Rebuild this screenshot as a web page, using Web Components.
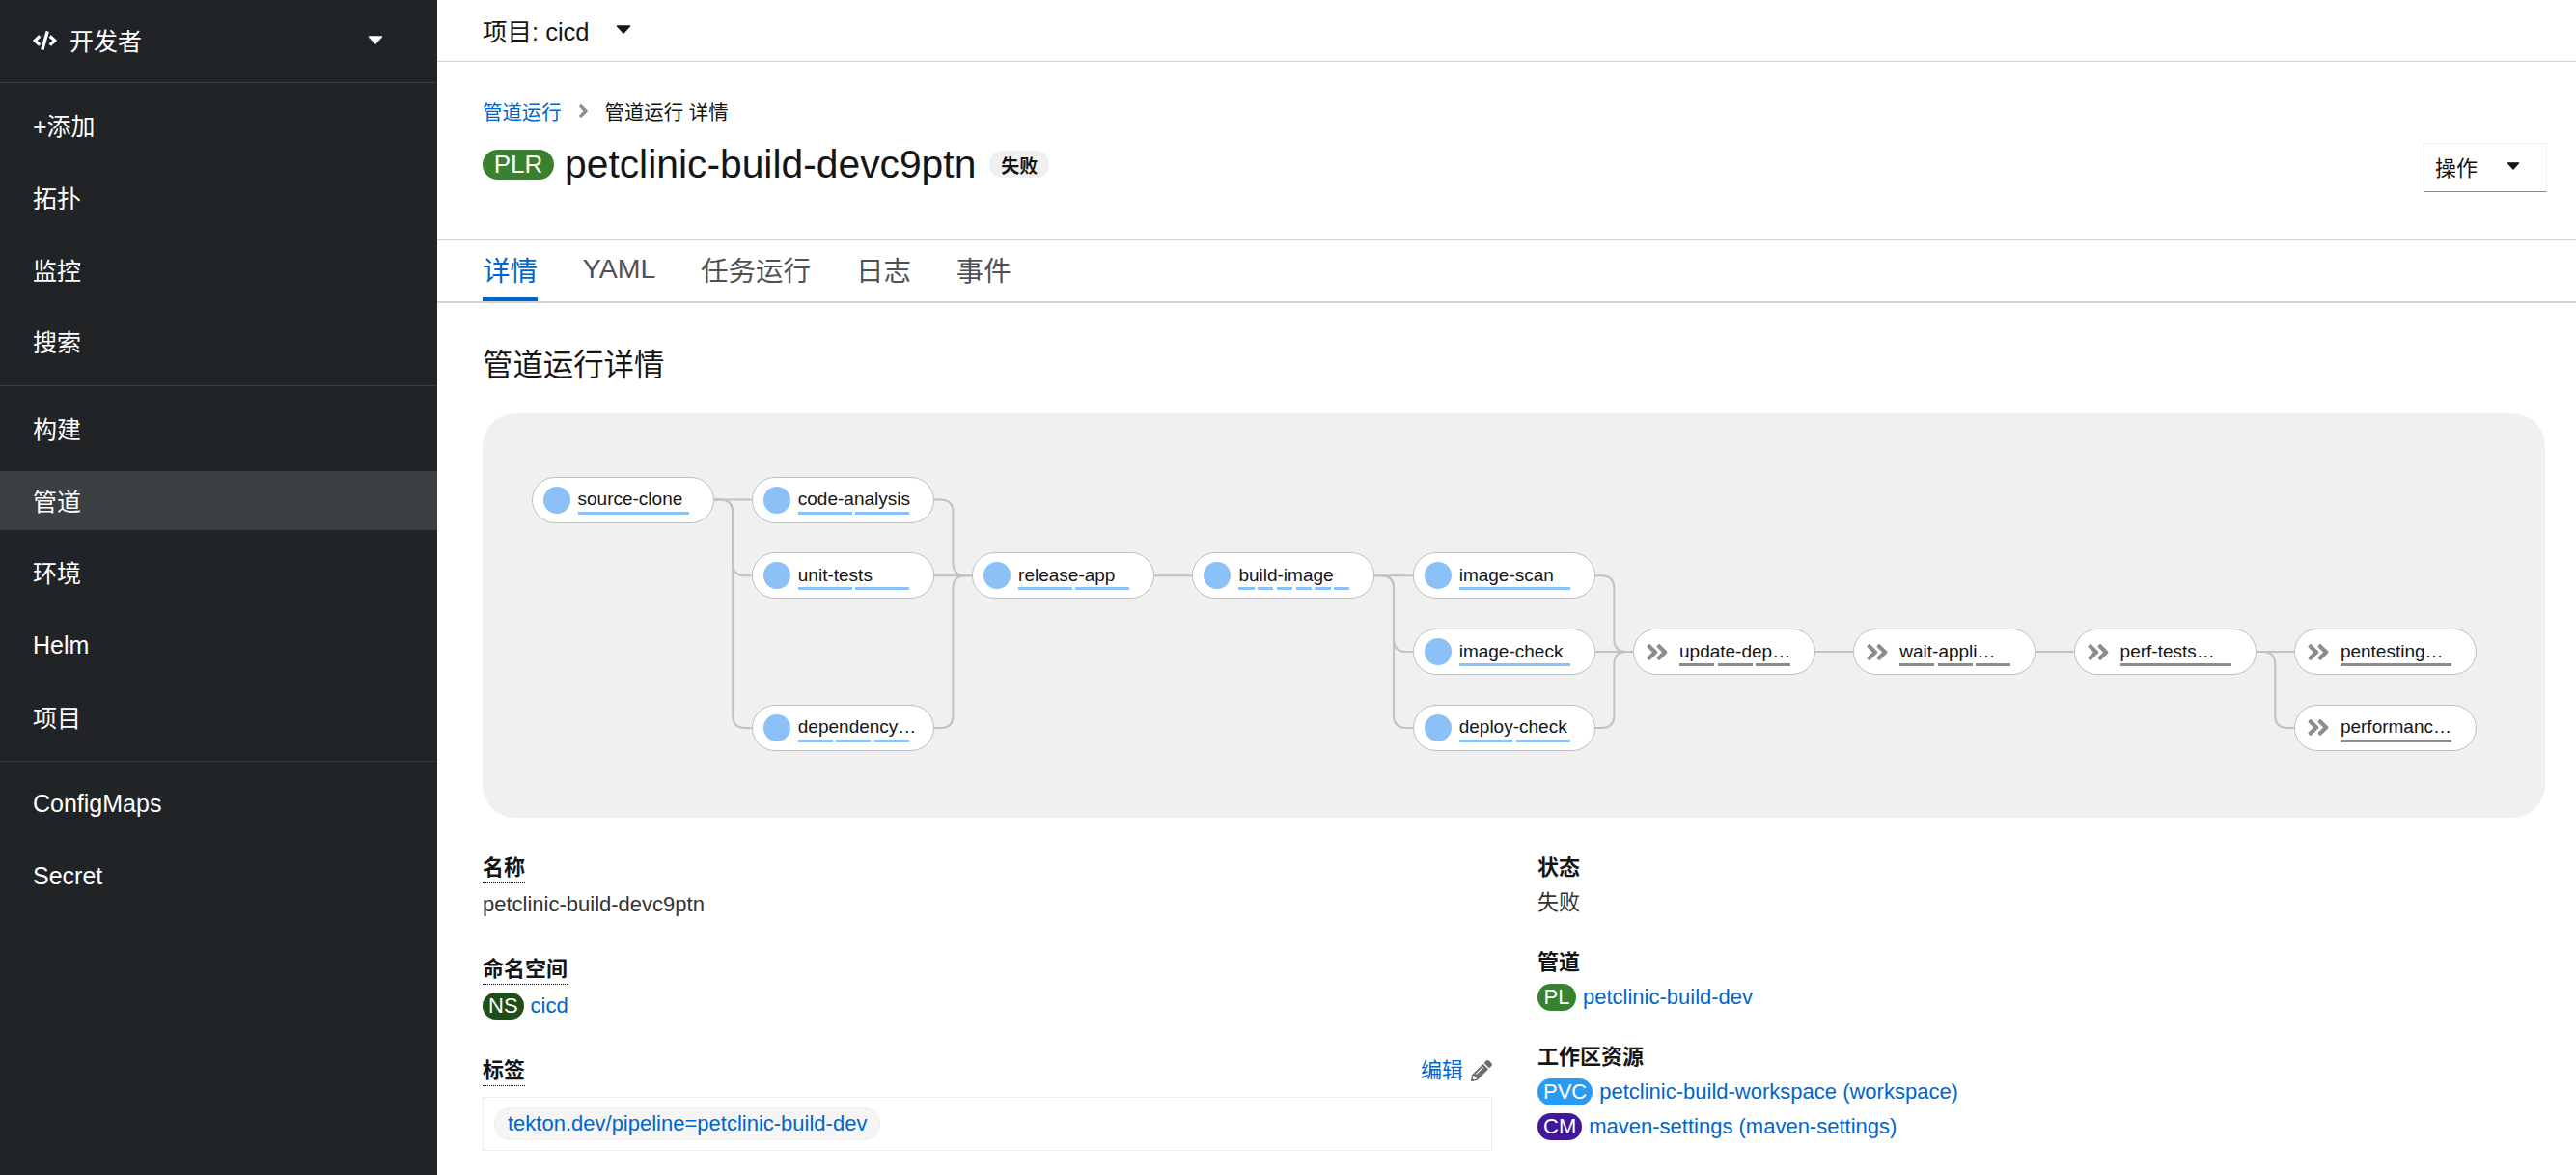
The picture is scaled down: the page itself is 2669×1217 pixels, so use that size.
<!DOCTYPE html>
<html lang="zh">
<head>
<meta charset="utf-8">
<title>petclinic-build-devc9ptn</title>
<style>
  html, body { margin: 0; height: 100%; }
  body {
    display: flex;
    height: 1217px;
    overflow: hidden;
    background: #fff;
    color: #151515;
    font-family: "Liberation Sans", "Noto Sans CJK SC", sans-serif;
    font-size: 22px;
  }
</style>
</head>
<body>
  <dev-sidebar>
    <nav-group>
      <nav-item>+添加</nav-item>
      <nav-item>拓扑</nav-item>
      <nav-item>监控</nav-item>
      <nav-item>搜索</nav-item>
    </nav-group>
    <nav-group>
      <nav-item>构建</nav-item>
      <nav-item data-active>管道</nav-item>
      <nav-item>环境</nav-item>
      <nav-item>Helm</nav-item>
      <nav-item>项目</nav-item>
    </nav-group>
    <nav-group data-last>
      <nav-item>ConfigMaps</nav-item>
      <nav-item>Secret</nav-item>
    </nav-group>
  </dev-sidebar>
  <run-page>
    <project-bar data-project="cicd"></project-bar>
    <page-header data-name="petclinic-build-devc9ptn" data-status="失败"></page-header>
    <tab-bar data-tabs="详情,YAML,任务运行,日志,事件"></tab-bar>
    <details-section>
      <pipeline-graph></pipeline-graph>
      <detail-col slot="left">
        <detail-item data-label="名称" data-hint>petclinic-build-devc9ptn</detail-item>
        <detail-item data-label="命名空间" data-hint>
          <res-link data-kind="NS" data-color="#1e4f18">cicd</res-link>
        </detail-item>
        <detail-item data-label="标签" data-hint data-edit>
          <label-box>tekton.dev/pipeline=petclinic-build-dev</label-box>
        </detail-item>
      </detail-col>
      <detail-col slot="right">
        <detail-item data-label="状态">失败</detail-item>
        <detail-item data-label="管道">
          <res-link data-kind="PL" data-color="#38812f">petclinic-build-dev</res-link>
        </detail-item>
        <detail-item data-label="工作区资源">
          <res-link data-kind="PVC" data-color="#2b9af3">petclinic-build-workspace (workspace)</res-link>
          <res-link data-kind="CM" data-color="#40199a">maven-settings (maven-settings)</res-link>
        </detail-item>
      </detail-col>
    </details-section>
  </run-page>

<script>
const CARET = (w, color) => `<svg width="${w}" height="${w * 0.56}" viewBox="0 0 16 9" style="display:block"><path d="M1.5 1H14.5L8 8Z" fill="${color}" stroke="${color}" stroke-width="1.6" stroke-linejoin="round"/></svg>`;

class DevSidebar extends HTMLElement {
  constructor() {
    super();
    this.attachShadow({ mode: 'open' });
  }

  connectedCallback() {
    this.shadowRoot.innerHTML = `
      <style>
        :host { display: block; flex: 0 0 453px; width: 453px; height: 100%; background: #212427; color: #fff; font-size: 25px; }
        .switcher { display: flex; align-items: center; height: 86px; box-sizing: border-box; padding: 0 56px 2px 34px; border-bottom: 1px solid #3c3f42; }
        .switcher svg.code { width: 25px; height: 20px; margin-right: 13px; fill: #fff; }
        .switcher span { flex: 1; margin-top: -2px; }
      </style>
      <div class="switcher">
        <svg class="code" viewBox="0 0 640 512"><path d="M278.9 511.5l-61-17.7c-6.4-1.8-10-8.5-8.2-14.9L346.2 8.7c1.8-6.4 8.5-10 14.9-8.2l61 17.7c6.4 1.8 10 8.5 8.2 14.9L293.8 503.3c-1.9 6.4-8.5 10.1-14.9 8.2zm-114-112.2l43.5-46.4c4.6-4.9 4.3-12.7-.8-17.2L117 256l90.6-79.7c5.1-4.5 5.5-12.3.8-17.2l-43.5-46.4c-4.5-4.8-12.1-5.1-17-.5L3.8 247.2c-5.1 4.7-5.1 12.8 0 17.5l144.1 135.1c4.9 4.6 12.5 4.4 17-.5zm327.2.6l144.1-135.1c5.1-4.7 5.1-12.8 0-17.5L492.1 112.1c-4.8-4.5-12.4-4.3-17 .5L431.6 159c-4.6 4.9-4.3 12.7.8 17.2L523 256l-90.6 79.7c-5.1 4.5-5.5 12.3-.8 17.2l43.5 46.4c4.5 4.9 12.1 5.1 17 .6z"/></svg>
        <span>开发者</span>
        ${CARET(16, '#fff')}
      </div>
      <slot></slot>
    `;
  }
}
customElements.define('dev-sidebar', DevSidebar);

class NavGroup extends HTMLElement {
  constructor() {
    super();
    this.attachShadow({ mode: 'open' });
  }

  connectedCallback() {
    const last = this.hasAttribute('data-last');
    this.shadowRoot.innerHTML = `
      <style>
        :host { display: flex; flex-direction: column; gap: 13.8px; padding: 13.5px 0 14px; ${last ? '' : 'border-bottom: 1px solid #3c3f42;'} }
      </style>
      <slot></slot>
    `;
  }
}
customElements.define('nav-group', NavGroup);

class NavItem extends HTMLElement {
  constructor() {
    super();
    this.attachShadow({ mode: 'open' });
  }

  connectedCallback() {
    const active = this.hasAttribute('data-active');
    // the chinese labels sit a little higher than the latin ones
    const cjk = /[^\x00-\x7f]/.test(this.textContent);
    this.shadowRoot.innerHTML = `
      <style>
        :host { display: flex; align-items: center; height: 61px; box-sizing: border-box; padding: 0 0 ${cjk ? 2 : 0}px 34px; background: ${active ? '#3c3f42' : 'transparent'}; }
      </style>
      <slot></slot>
    `;
  }
}
customElements.define('nav-item', NavItem);

class RunPage extends HTMLElement {
  constructor() {
    super();
    this.attachShadow({ mode: 'open' });
  }

  connectedCallback() {
    this.shadowRoot.innerHTML = `
      <style>
        :host { display: flex; flex-direction: column; flex: 1; min-width: 0; }
        ::slotted(*) { flex: none; }
      </style>
      <slot></slot>
    `;
  }
}
customElements.define('run-page', RunPage);

class ProjectBar extends HTMLElement {
  constructor() {
    super();
    this.attachShadow({ mode: 'open' });
  }

  connectedCallback() {
    const project = this.getAttribute('data-project') || '';
    this.shadowRoot.innerHTML = `
      <style>
        :host { display: flex; align-items: center; gap: 27px; height: 64px; box-sizing: border-box; padding: 0 0 2px 47px; border-bottom: 1px solid #d2d2d2; font-size: 25.5px; }
      </style>
      <span>项目: ${project}</span>
      ${CARET(16, '#151515')}
    `;
  }
}
customElements.define('project-bar', ProjectBar);

class PageHeader extends HTMLElement {
  constructor() {
    super();
    this.attachShadow({ mode: 'open' });
  }

  connectedCallback() {
    const name = this.getAttribute('data-name') || '';
    const status = this.getAttribute('data-status') || '';
    this.shadowRoot.innerHTML = `
      <style>
        :host { display: flex; justify-content: space-between; height: 185px; box-sizing: border-box; padding: 36px 30px 0 47px; border-bottom: 1px solid #d2d2d2; }
        .crumbs { display: flex; align-items: center; height: 30px; font-size: 20.4px; }
        .crumbs a { color: #06c; }
        .crumbs svg { width: 11px; height: 22px; margin: 0 17px 0 17px; fill: #8a8d90; }
        .title { display: flex; align-items: center; margin-top: 20px; height: 40px; }
        .plr { display: inline-flex; align-items: center; justify-content: center; width: 74px; height: 31px; border-radius: 16px; background: #38812f; color: #fff; font-size: 26px; }
        h1 { margin: 0 14px 0 11px; font-size: 40.8px; font-weight: 400; line-height: 40px; }
        .status { display: inline-flex; align-items: center; justify-content: center; width: 62px; height: 28px; border-radius: 14px; background: #f0f0f0; font-size: 19px; font-weight: 700; }
        .actions { display: flex; align-items: center; justify-content: space-between; width: 128px; height: 51px; box-sizing: border-box; margin-top: 48px; padding: 0 27px 3px 11px; border: 1px solid #f0f0f0; border-bottom: 1px solid #8a8d90; }
      </style>
      <div>
        <div class="crumbs">
          <a>管道运行</a>
          <svg viewBox="0 0 256 512"><path d="M224.3 273l-136 136c-9.4 9.4-24.6 9.4-33.9 0l-22.6-22.6c-9.4-9.4-9.4-24.6 0-33.9l96.4-96.4-96.4-96.4c-9.4-9.4-9.4-24.6 0-33.9L54.3 103c9.4-9.4 24.6-9.4 33.9 0l136 136c9.5 9.4 9.5 24.6.1 34z"/></svg>
          <span>管道运行 详情</span>
        </div>
        <div class="title">
          <span class="plr">PLR</span>
          <h1>${name}</h1>
          <span class="status">${status}</span>
        </div>
      </div>
      <div class="actions"><span>操作</span>${CARET(14, '#151515')}</div>
    `;
  }
}
customElements.define('page-header', PageHeader);

class TabBar extends HTMLElement {
  constructor() {
    super();
    this.attachShadow({ mode: 'open' });
  }

  connectedCallback() {
    const tabs = (this.getAttribute('data-tabs') || '').split(',');
    this.shadowRoot.innerHTML = `
      <style>
        :host { display: flex; gap: 46.8px; height: 65px; box-sizing: border-box; padding-left: 47px; border-bottom: 2px solid #d2d2d2; font-size: 28.5px; color: #4f5255; }
        span { display: flex; align-items: center; height: 63px; box-sizing: border-box; padding-bottom: 4px; }
        .on { color: #06c; border-bottom: 4px solid #06c; padding-bottom: 0; }
      </style>
      ${tabs.map((t, i) => `<span class="${i === 0 ? 'on' : ''}">${t}</span>`).join('')}
    `;
  }
}
customElements.define('tab-bar', TabBar);

class DetailsSection extends HTMLElement {
  constructor() {
    super();
    this.attachShadow({ mode: 'open' });
  }

  connectedCallback() {
    this.shadowRoot.innerHTML = `
      <style>
        :host { display: block; padding: 43px 32px 0 47px; }
        h2 { margin: 0 0 27px; font-size: 31.4px; font-weight: 400; line-height: 44px; }
        .cols { display: grid; grid-template-columns: 1046px 1fr; column-gap: 47px; margin-top: 37px; }
      </style>
      <h2>管道运行详情</h2>
      <slot></slot>
      <div class="cols">
        <slot name="left"></slot>
        <slot name="right"></slot>
      </div>
    `;
  }
}
customElements.define('details-section', DetailsSection);

// nodes of the diagram: col, row, label, segments of the bar, pending
const NODES = [
  [0, 0, 'source-clone', 1], [1, 0, 'code-analysis', 2], [1, 1, 'unit-tests', 2], [1, 3, 'dependency…', 3],
  [2, 1, 'release-app', 2], [3, 1, 'build-image', 6], [4, 1, 'image-scan', 1], [4, 2, 'image-check', 1],
  [4, 3, 'deploy-check', 2], [5, 2, 'update-dep…', 3, true], [6, 2, 'wait-appli…', 3, true],
  [7, 2, 'perf-tests…', 1, true], [8, 2, 'pentesting…', 1, true], [8, 3, 'performanc…', 1, true]
];
const COL_STEP = 228.3, ROW_STEP = 78.8, NODE_W = 189, NODE_H = 48, LEFT = 50.5, TOP = 65.5;
const nodeX = c => LEFT + c * COL_STEP;
const nodeY = r => TOP + r * ROW_STEP;

class PipelineGraph extends HTMLElement {
  constructor() {
    super();
    this.attachShadow({ mode: 'open' });
  }

  // straight link when the rows match, otherwise out along the row, down the gap and in
  edge(c, r1, r2) {
    const x1 = nodeX(c) + NODE_W, x2 = nodeX(c + 1);
    const y1 = nodeY(r1) + NODE_H / 2, y2 = nodeY(r2) + NODE_H / 2;
    if (r1 === r2) return `M${x1} ${y1}H${x2}`;
    const mx = (x1 + x2) / 2, q = 13, dir = y2 > y1 ? 1 : -1;
    return `M${x1} ${y1}H${mx - q}Q${mx} ${y1} ${mx} ${y1 + dir * q}V${y2 - dir * q}Q${mx} ${y2} ${mx + q} ${y2}H${x2}`;
  }

  connectedCallback() {
    const edges = [
      [0, 0, 0], [0, 0, 1], [0, 0, 3], [1, 0, 1], [1, 1, 1], [1, 3, 1], [2, 1, 1], [3, 1, 1], [3, 1, 2], [3, 1, 3],
      [4, 1, 2], [4, 2, 2], [4, 3, 2], [5, 2, 2], [6, 2, 2], [7, 2, 2], [7, 2, 3]
    ].map(e => `<path d="${this.edge(e[0], e[1], e[2])}"/>`).join('');
    const nodes = NODES.map(n => `<pipeline-node style="left:${nodeX(n[0])}px;top:${nodeY(n[1])}px" data-name="${n[2]}" data-steps="${n[3]}" ${n[4] ? 'data-pending' : ''}></pipeline-node>`).join('');
    this.shadowRoot.innerHTML = `
      <style>
        :host { display: block; position: relative; height: 419px; border-radius: 34px; background: #f0f0f0; }
        svg { position: absolute; inset: 0; width: 100%; height: 100%; fill: none; stroke: #c0c2c4; stroke-width: 2; }
        pipeline-node { position: absolute; }
      </style>
      <svg>${edges}</svg>
      ${nodes}
    `;
  }
}

class PipelineNode extends HTMLElement {
  constructor() {
    super();
    this.attachShadow({ mode: 'open' });
  }

  connectedCallback() {
    const name = this.getAttribute('data-name') || '';
    const steps = Number(this.getAttribute('data-steps')) || 1;
    const pending = this.hasAttribute('data-pending');
    const color = pending ? '#8a8d90' : '#8bc1f7';
    const icon = pending
      ? `<svg class="icon" viewBox="0 0 448 512"><path d="M224.3 273l-136 136c-9.4 9.4-24.6 9.4-33.9 0l-22.6-22.6c-9.4-9.4-9.4-24.6 0-33.9l96.4-96.4-96.4-96.4c-9.4-9.4-9.4-24.6 0-33.9L54.3 103c9.4-9.4 24.6-9.4 33.9 0l136 136c9.5 9.4 9.5 24.6.1 34zm192-34l-136-136c-9.4-9.4-24.6-9.4-33.9 0l-22.6 22.6c-9.4 9.4-9.4 24.6 0 33.9l96.4 96.4-96.4 96.4c-9.4 9.4-9.4 24.6 0 33.9l22.6 22.6c9.4 9.4 24.6 9.4 33.9 0l136-136c9.4-9.2 9.4-24.4 0-33.8z"/></svg>`
      : `<span class="dot"></span>`;
    this.shadowRoot.innerHTML = `
      <style>
        :host { display: block; width: ${NODE_W}px; height: ${NODE_H}px; box-sizing: border-box; border: 1.5px solid #bcbfc2; border-radius: 24px; background: #fff; }
        .wrap { position: relative; display: flex; align-items: center; height: 100%; padding-left: 11px; }
        .dot { flex: none; width: 28px; height: 28px; border-radius: 50%; background: ${color}; margin-right: 8px; }
        .icon { flex: none; width: 24px; height: 27px; margin: 0 11px 0 1px; fill: #8a8d90; }
        .label { font-size: 19px; color: #151515; line-height: 22px; white-space: nowrap; margin-top: -1px; }
        .bars { position: absolute; left: 47px; top: 35px; width: 115px; height: 3px; display: flex; gap: 3.5px; }
        .bars i { flex: 1; background: ${color}; }
      </style>
      <div class="wrap">
        ${icon}
        <span class="label">${name}</span>
        <div class="bars">${'<i></i>'.repeat(steps)}</div>
      </div>
    `;
  }
}
customElements.define('pipeline-node', PipelineNode);
customElements.define('pipeline-graph', PipelineGraph);

class DetailCol extends HTMLElement {
  constructor() {
    super();
    this.attachShadow({ mode: 'open' });
  }

  connectedCallback() {
    this.shadowRoot.innerHTML = `
      <style>
        :host { display: flex; flex-direction: column; }
      </style>
      <slot></slot>
    `;
  }
}
customElements.define('detail-col', DetailCol);

class DetailItem extends HTMLElement {
  constructor() {
    super();
    this.attachShadow({ mode: 'open' });
  }

  connectedCallback() {
    const label = this.getAttribute('data-label') || '';
    const hint = this.hasAttribute('data-hint');
    const edit = this.hasAttribute('data-edit');
    this.shadowRoot.innerHTML = `
      <style>
        :host { display: block; margin-bottom: ${hint ? 37 : 32}px; line-height: 30px; color: #333; }
        .head { display: flex; justify-content: space-between; align-items: center; height: 30px; ${hint ? 'margin-bottom: 8px;' : 'margin-bottom: 6px;'} }
        .name { font-weight: 700; line-height: 30px; color: #151515; ${hint ? 'border-bottom: 1px dotted #151515;' : ''} }
        .edit { display: flex; align-items: center; gap: 8px; color: #06c; font-weight: 400; }
        .edit svg { width: 22px; height: 22px; fill: #6a6e73; }
      </style>
      <div class="head">
        <span class="name">${label}</span>
        ${edit ? `<span class="edit">编辑<svg viewBox="0 0 512 512"><path d="M497.9 142.1l-46.1 46.1c-4.7 4.7-12.3 4.7-17 0l-111-111c-4.7-4.7-4.7-12.3 0-17l46.1-46.1c18.7-18.7 49.1-18.7 67.9 0l60.1 60.1c18.8 18.7 18.8 49.1 0 67.9zM284.2 99.8L21.6 362.4.4 483.9c-2.9 16.4 11.4 30.6 27.8 27.8l121.5-21.3 262.6-262.6c4.7-4.7 4.7-12.3 0-17l-111-111c-4.8-4.7-12.4-4.7-17.1 0zM124.1 339.9c-5.5-5.5-5.5-14.3 0-19.8l154-154c5.5-5.5 14.3-5.5 19.8 0s5.5 14.3 0 19.8l-154 154c-5.5 5.5-14.3 5.5-19.8 0zM88 424h48v36.3l-64.5 11.3-31.1-31.1L51.7 376H88v48z"/></svg></span>` : ''}
      </div>
      <slot></slot>
    `;
  }
}
customElements.define('detail-item', DetailItem);

class ResLink extends HTMLElement {
  constructor() {
    super();
    this.attachShadow({ mode: 'open' });
  }

  connectedCallback() {
    const kind = this.getAttribute('data-kind') || '';
    const color = this.getAttribute('data-color') || '#06c';
    this.shadowRoot.innerHTML = `
      <style>
        :host { display: flex; align-items: center; height: 30px; color: #06c; }
        :host(:not(:last-child)) { margin-bottom: 6px; }
        .badge { display: inline-flex; align-items: center; justify-content: center; height: 28px; min-width: 28px; padding: 0 6px; border-radius: 14px; background: ${color}; color: #fff; font-size: 22px; margin-right: 7px; }
      </style>
      <span class="badge">${kind}</span>
      <slot></slot>
    `;
  }
}
customElements.define('res-link', ResLink);

class LabelBox extends HTMLElement {
  constructor() {
    super();
    this.attachShadow({ mode: 'open' });
  }

  connectedCallback() {
    this.shadowRoot.innerHTML = `
      <style>
        :host { display: block; height: 56px; box-sizing: border-box; margin-top: 12px; padding: 10px 11px; border: 1px solid #ededed; }
        span { display: inline-flex; align-items: center; height: 34px; box-sizing: border-box; padding: 0 13px; border: 1px solid #ededed; border-radius: 17px; background: #f5f5f5; color: #06c; }
      </style>
      <span><slot></slot></span>
    `;
  }
}
customElements.define('label-box', LabelBox);
</script>
</body>
</html>
